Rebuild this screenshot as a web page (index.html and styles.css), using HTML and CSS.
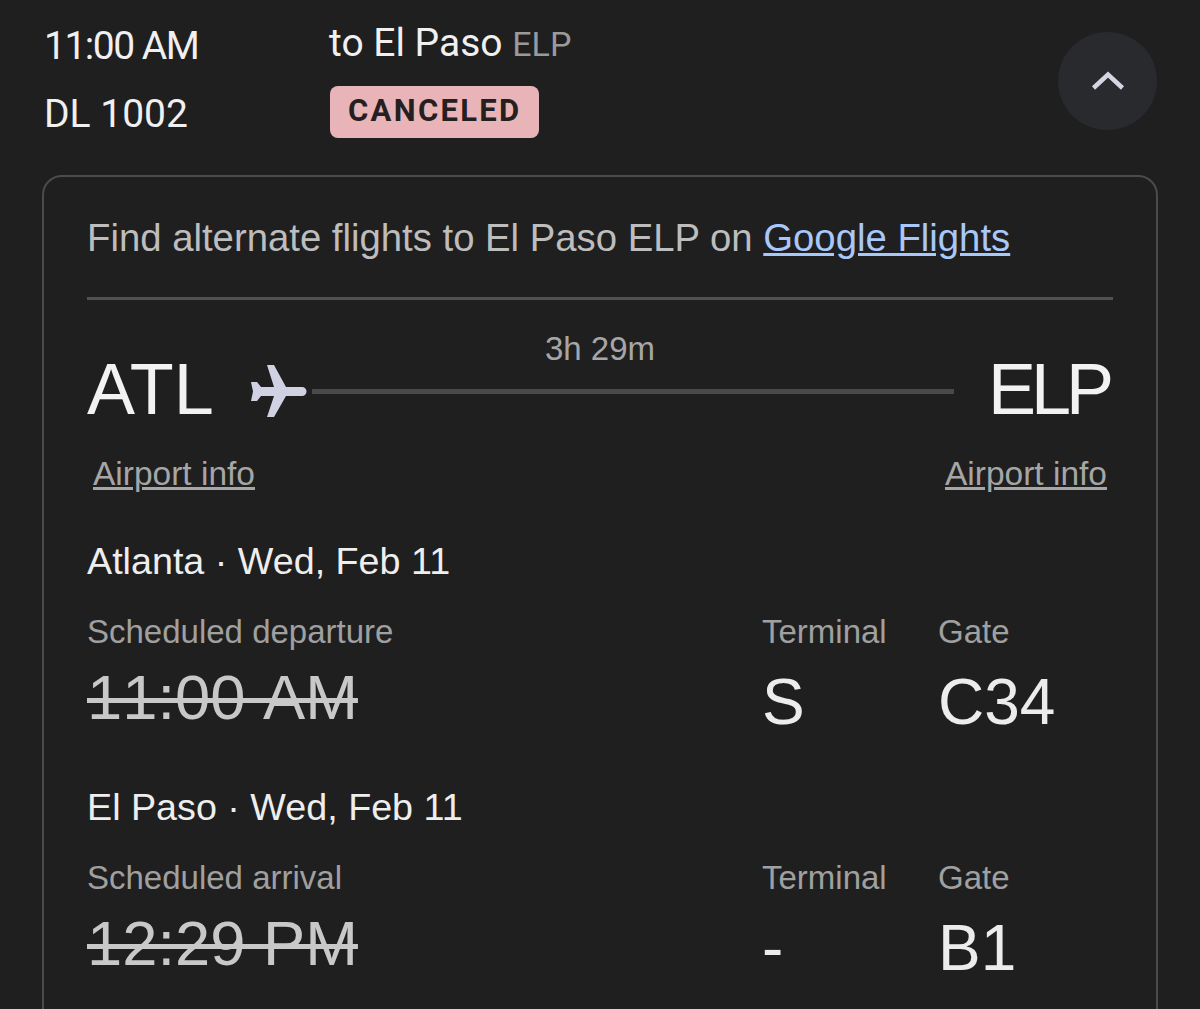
FILE: index.html
```html
<!DOCTYPE html>
<html lang="en">
<head>
    <meta charset="UTF-8">
    <meta name="viewport" content="width=device-width, initial-scale=1.0">
    <title>DL 1002 flight status</title>
    <link rel="stylesheet" href="styles.css">
</head>
<body>
    <header class="summary">
        <div class="summary-left">
            <div class="summary-time">11:00 AM</div>
            <div class="summary-flight">DL 1002</div>
        </div>
        <div class="summary-right">
            <div class="summary-dest">to El Paso <span class="summary-code">ELP</span></div>
            <span class="status-badge">CANCELED</span>
        </div>
        <button class="collapse-btn" aria-label="Collapse">
            <svg width="36" height="24" viewBox="0 0 36 24"><path d="M3.5 20 L18 6.5 L32.5 20" fill="none" stroke="#d5d6e4" stroke-width="4.5"/></svg>
        </button>
    </header>

    <section class="card">
        <p class="alternate">Find alternate flights to El Paso ELP on <a href="#">Google Flights</a></p>
        <hr class="divider">

        <div class="route">
            <span class="route-duration">3h 29m</span>
            <div class="route-code">ATL</div>
            <svg class="plane" width="58" height="54" viewBox="0 0 58 54">
                <path d="M18 1 H25 L37 23 H53 A4.5 4.5 0 0 1 53 32 H37 L25 53 H18 L25 32 H12 L8 37 H2 L4 27.5 L2 18 H8 L12 23 H25 Z" fill="#d0d1e2"/>
            </svg>
            <div class="route-line"></div>
            <div class="route-code route-code-end">ELP</div>
        </div>
        <div class="airport-links">
            <a href="#">Airport info</a>
            <a href="#">Airport info</a>
        </div>

        <div class="leg">
            <div class="leg-title">Atlanta · Wed, Feb 11</div>
            <div class="leg-grid">
                <div class="leg-label">Scheduled departure</div>
                <div class="leg-label">Terminal</div>
                <div class="leg-label">Gate</div>
                <div class="leg-value struck">11:00 AM</div>
                <div class="leg-value">S</div>
                <div class="leg-value">C34</div>
            </div>
        </div>

        <div class="leg">
            <div class="leg-title">El Paso · Wed, Feb 11</div>
            <div class="leg-grid">
                <div class="leg-label">Scheduled arrival</div>
                <div class="leg-label">Terminal</div>
                <div class="leg-label">Gate</div>
                <div class="leg-value struck">12:29 PM</div>
                <div class="leg-value">-</div>
                <div class="leg-value">B1</div>
            </div>
        </div>
    </section>
</body>
</html>
```

FILE: styles.css
```css
html, body {
    height: 1009px;
    overflow: hidden;
}
body {
    background-color: #1f1f20;
    color: #e8e8e8;
    font-family: "Liberation Sans", Arial, sans-serif;
    margin: 0;
    padding: 0;
}
.summary {
    display: flex;
    align-items: flex-start;
    height: 175px;
    padding: 0 42px 0 44px;
    box-sizing: border-box;
    font-family: Roboto, "Liberation Sans", sans-serif;
}
.summary-left {
    width: 285px;
    padding-top: 23px;
    font-size: 39px;
    line-height: 46px;
    color: #f0f0f0;
}
.summary-time {
    letter-spacing: -1.5px;
}
.summary-flight {
    margin-top: 22px;
}
.summary-right {
    flex: 1;
    padding-top: 20px;
}
.summary-dest {
    font-size: 39px;
    line-height: 46px;
    color: #f0f0f0;
}
.summary-code {
    font-size: 34px;
    color: #9a9a9a;
}
.status-badge {
    display: inline-block;
    margin: 19px 0 0 1px;
    padding: 0 18px;
    height: 52px;
    line-height: 50px;
    border-radius: 8px;
    background-color: #e8b4b8;
    color: #25201f;
    font-size: 31px;
    font-weight: 700;
    letter-spacing: 2.3px;
}
.collapse-btn {
    width: 99px;
    height: 98px;
    margin-top: 32px;
    margin-right: 1px;
    border: none;
    border-radius: 50%;
    background-color: #292a2d;
    display: flex;
    align-items: center;
    justify-content: center;
    padding: 0 0 3px;
}
.card {
    margin: 0 42px;
    padding: 38px 43px 0;
    height: 900px;
    box-sizing: border-box;
    border: 2px solid #4a4b4d;
    border-radius: 20px;
}
.alternate {
    margin: 0;
    font-size: 38.3px;
    line-height: 45px;
    color: #bdbdbd;
}
.alternate a {
    color: #a8c7fa;
}
.divider {
    margin: 37px 0 0;
    border: none;
    height: 3px;
    background-color: #505154;
}
.route {
    display: flex;
    align-items: center;
    position: relative;
    margin-top: 46px;
    height: 90px;
}
.route-code {
    font-size: 72px;
    line-height: 88px;
    margin-bottom: 4px;
    color: #f2f2f2;
}
.route-code-end {
    letter-spacing: -5px;
    margin-right: 4px;
}
.plane {
    margin-left: 35px;
    flex-shrink: 0;
}
.route-line {
    flex: 1;
    height: 5px;
    margin: 0 34px 0 5px;
    background-color: #47494a;
}
.route-duration {
    position: absolute;
    left: 0;
    right: 0;
    top: -17px;
    text-align: center;
    font-size: 33px;
    line-height: 40px;
    color: #a6a6a6;
}
.airport-links {
    display: flex;
    justify-content: space-between;
    padding: 0 6px;
    margin-top: 18px;
    font-size: 33.5px;
    line-height: 40px;
}
.airport-links a {
    color: #a6a6a6;
}
.leg {
    margin-top: 45px;
}
.leg-title {
    font-size: 37.7px;
    line-height: 44px;
    color: #eeeeee;
}
.leg-grid {
    display: grid;
    grid-template-columns: 675px 176px 1fr;
    margin-top: 29px;
}
.leg-label {
    font-size: 33px;
    line-height: 40px;
    color: #a0a0a0;
}
.leg-value {
    font-size: 64px;
    line-height: 76px;
    margin-top: 12px;
    color: #ececec;
}
.struck {
    margin-top: 7px;
    font-size: 63.3px;
    font-kerning: none;
    color: #c8c8c8;
    text-decoration: line-through;
    text-decoration-thickness: 5px;
}
```
